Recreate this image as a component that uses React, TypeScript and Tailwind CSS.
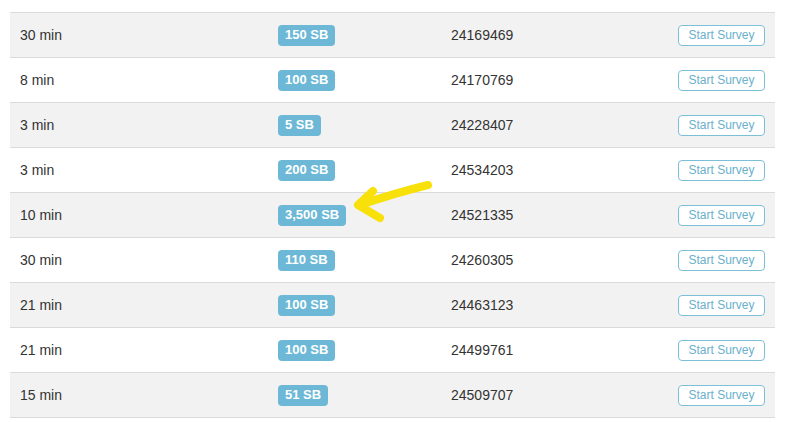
const rows = [
  { time: "30 min", sb: "150 SB", id: "24169469" },
  { time: "8 min", sb: "100 SB", id: "24170769" },
  { time: "3 min", sb: "5 SB", id: "24228407" },
  { time: "3 min", sb: "200 SB", id: "24534203" },
  { time: "10 min", sb: "3,500 SB", id: "24521335" },
  { time: "30 min", sb: "110 SB", id: "24260305" },
  { time: "21 min", sb: "100 SB", id: "24463123" },
  { time: "21 min", sb: "100 SB", id: "24499761" },
  { time: "15 min", sb: "51 SB", id: "24509707" },
];

export default function App() {
  return (
    <div className="relative w-[794px] h-[422px] overflow-hidden bg-white font-['Liberation_Sans',Arial,sans-serif] text-[14px] text-[#333]">
      {/* survey table, previous row cut off at the top */}
      <div className="-mt-[33px] ml-[10px] w-[765px] border-b border-[#dadada]">
        <div className="flex items-center h-[45px] bg-white">
          <div className="w-[268px]" />
          <div className="w-[173px]">
            <span className="block h-[21px] w-[57px] rounded-[4px] bg-[#6cb8d6]" />
          </div>
          <div className="flex-1" />
          <div className="pr-[10px]">
            <span className="block h-[21px] w-[87px] rounded-[4px] border border-[#7cc0d8] bg-white" />
          </div>
        </div>
        {rows.map((r, i) => (
          <div
            key={i}
            className={`flex items-center h-[45px] border-t border-[#dadada] ${
              i % 2 === 0 ? "bg-[#f2f2f2]" : "bg-white"
            }`}
          >
            <div className="w-[268px] pl-[10px]">{r.time}</div>
            <div className="w-[173px]">
              <span className="inline-flex items-center h-[21px] px-[7px] rounded-[4px] bg-[#6cb8d6] text-white font-bold text-[13px]">
                {r.sb}
              </span>
            </div>
            <div className="flex-1">{r.id}</div>
            <div className="pr-[10px]">
              <button className="h-[21px] w-[87px] rounded-[4px] border border-[#7cc0d8] bg-white text-[12px] text-[#6aafcb]">
                Start Survey
              </button>
            </div>
          </div>
        ))}
      </div>

      {/* yellow annotation arrow */}
      <svg
        className="absolute left-0 top-0 pointer-events-none"
        width="794"
        height="422"
        viewBox="0 0 794 422"
      >
        <path
          d="M428 185 Q395 193 360 205 M373 191 L358 205 L380 218"
          fill="none"
          stroke="#f8e00a"
          strokeWidth="8"
          strokeLinecap="round"
          strokeLinejoin="round"
        />
      </svg>
    </div>
  );
}
